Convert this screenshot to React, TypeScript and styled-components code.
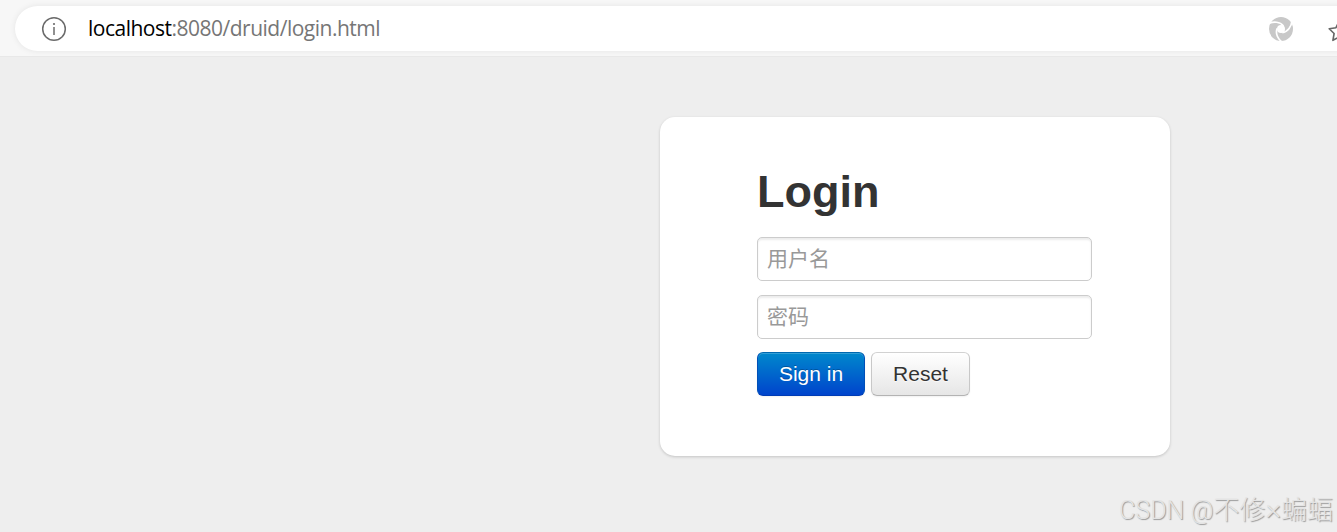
import React from 'react'
import styled, { createGlobalStyle } from 'styled-components'

const GlobalStyle = createGlobalStyle`
  * {
    box-sizing: border-box;
  }

  body {
    margin: 0;
    background: #eee;
    color: #333;
    font-family: 'Liberation Sans', 'Noto Sans CJK SC', sans-serif;
    overflow: hidden;
  }
`

const Page = styled.div`
  height: 532px;
  display: flex;
  flex-direction: column;
  position: relative;
  overflow: hidden;
`

const Toolbar = styled.header`
  height: 57px;
  flex: none;
  padding: 6px 0 0 15px;
  background: #f7f7f7;
  border-bottom: 1px solid #e8e8e8;
`

const AddressBar = styled.div`
  width: 1360px;
  height: 45px;
  display: flex;
  align-items: center;
  padding-left: 26px;
  background: #fff;
  border-radius: 23px;
  box-shadow: 0 0 6px rgba(0, 0, 0, 0.08);
`

const Url = styled.div`
  width: 1180px;
  margin-left: 21px;
  padding-bottom: 1px;
  color: #767676;
  font-family: 'Open Sans', sans-serif;
  font-size: 21px;
  line-height: 28px;
  letter-spacing: -0.5px;
  white-space: nowrap;
`

const Host = styled.span`
  color: #000;
`

const StarIcon = styled.svg`
  margin: 4px 0 0 33px;
`

const Card = styled.form`
  width: 510px;
  height: 339px;
  margin: 60px 0 0 660px;
  padding: 43px 78px 0 97px;
  background: #fff;
  border-radius: 15px;
  box-shadow: 0 1px 3px rgba(0, 0, 0, 0.18);
`

const Title = styled.h2`
  margin: 0 0 13px;
  font-size: 45px;
  line-height: 64px;
`

const Input = styled.input`
  display: block;
  width: 335px;
  height: 44px;
  margin: 0 0 14px;
  padding: 0 9px;
  border: 1px solid #ccc;
  border-radius: 5px;
  box-shadow: inset 0 2px 2px rgba(0, 0, 0, 0.075);
  font-family: 'Liberation Sans', 'Noto Sans CJK SC', sans-serif;
  font-size: 21px;

  &::placeholder {
    color: #999;
  }
`

const Actions = styled.div`
  display: flex;
  gap: 6px;
  margin-top: -1px;
`

const Button = styled.button<{ $primary?: boolean }>`
  width: ${({ $primary }) => ($primary ? 108 : 99)}px;
  height: 44px;
  padding: 0;
  border: 1px solid;
  border-color: ${({ $primary }) =>
    $primary ? '#0068b0 #0050b8 #003cb4' : '#d2d2d2 #c8c8c8 #b3b3b3'};
  border-radius: 6px;
  background: ${({ $primary }) =>
    $primary
      ? 'linear-gradient(#0088cc, #0044cc)'
      : 'linear-gradient(#fff, #e6e6e6)'};
  box-shadow: inset 0 1px 0 rgba(255, 255, 255, 0.2),
    0 1px 2px rgba(0, 0, 0, 0.06);
  color: ${({ $primary }) => ($primary ? '#fff' : '#333')};
  font-family: 'Liberation Sans', sans-serif;
  font-size: 21px;
  text-shadow: ${({ $primary }) =>
    $primary
      ? '0 -1px 0 rgba(0, 0, 0, 0.25)'
      : '0 1px 1px rgba(255, 255, 255, 0.75)'};
`

const Watermark = styled.div`
  position: absolute;
  right: 4px;
  bottom: 3px;
  color: #e4e4e4;
  font-family: Roboto, 'Noto Sans CJK SC', sans-serif;
  font-size: 25px;
  font-weight: 300;
  line-height: 36px;
  text-shadow: 1px 1px 1px #999;
  white-space: nowrap;
`

const Author = styled.span`
  font-size: 26px;
`

const Cross = styled.span`
  font-size: 30px;
  line-height: 1;
`

const App: React.FC = () => (
  <Page>
    <GlobalStyle />
    <Toolbar>
      <AddressBar>
        <svg width="26" height="26" viewBox="0 0 26 26" fill="none">
          <circle cx="13" cy="13" r="11.3" stroke="#6b6b6b" strokeWidth="1.5" />
          <path d="M13 11v8" stroke="#6b6b6b" strokeWidth="1.5" />
          <circle cx="13" cy="8" r="1.1" fill="#6b6b6b" />
        </svg>
        <Url>
          <Host>localhost</Host>:8080/druid/login.html
        </Url>
        <svg width="26" height="26" viewBox="0 0 26 26" fill="none">
          <circle cx="13" cy="13" r="12" fill="#c8c8c8" />
          <circle cx="13" cy="13" r="4" fill="#fff" />
          {[0, 120, 240].map((angle) => (
            <path
              key={angle}
              transform={`rotate(${angle} 13 13)`}
              d="M.5 7.500C5.500 5.300 12 5.500 15.500 10"
              stroke="#fff"
              strokeWidth="1.7"
            />
          ))}
        </svg>
        <StarIcon width="24" height="24" viewBox="0 0 24 24" fill="none">
          <path
            d="m12 2.500 3 6.200 6.800 1-4.900 4.800 1.200 6.800-6.100-3.200-6.100 3.200 1.200-6.800-4.900-4.800 6.800-1Z"
            stroke="#666"
            strokeWidth="1.6"
            strokeLinejoin="round"
          />
        </StarIcon>
      </AddressBar>
    </Toolbar>
    <Card onSubmit={(e) => e.preventDefault()}>
      <Title>Login</Title>
      <Input type="text" placeholder="用户名" />
      <Input type="password" placeholder="密码" />
      <Actions>
        <Button type="submit" $primary>
          Sign in
        </Button>
        <Button type="reset">Reset</Button>
      </Actions>
    </Card>
    <Watermark>
      CSDN @
      <Author>
        不修<Cross>×</Cross>蝙蝠
      </Author>
    </Watermark>
  </Page>
)

export default App
